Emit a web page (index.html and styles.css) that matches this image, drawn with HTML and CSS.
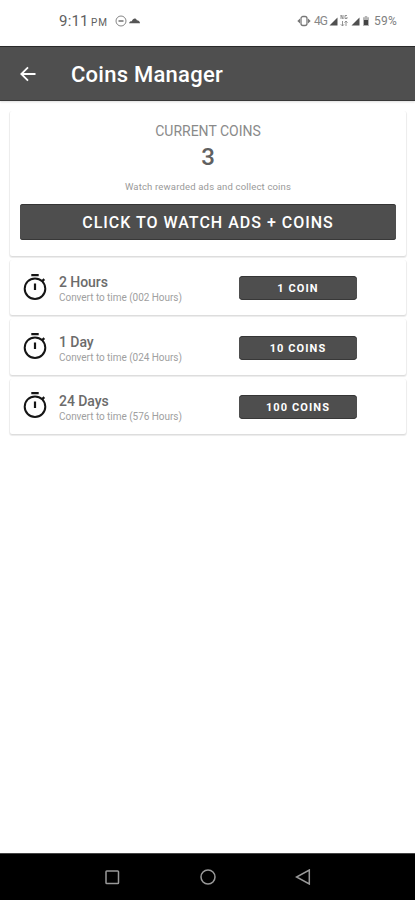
FILE: index.html
```html
<!DOCTYPE html>
<html lang="en">
<head>
<meta charset="utf-8">
<title>Coins Manager</title>
<link rel="stylesheet" href="styles.css">
</head>
<body>
<div class="screen">
  <div class="status">
    <span class="clock">9:11</span><span class="pm">PM</span>
    <svg class="notif" width="26" height="12" viewBox="0 0 26 12"><circle cx="6" cy="6" r="5" fill="none" stroke="#858585"/><path d="M3.500 6h5" stroke="#666" stroke-width="1.400"/><path d="M14 8.300c.3-1.700 1.800-2.300 2.800-2.100C18 2.700 21 2.600 21.900 5.200c1.900.1 3 1.300 3.100 3.100z" fill="#555"/></svg>
    <svg class="vibrate" width="14" height="12" viewBox="0 0 14 12"><rect x="4" y="1.500" width="6" height="9" rx="2" fill="none" stroke="#777" stroke-width="1.300"/><path d="M3 3.500v5L.3 6zM11 3.500v5L13.700 6z" fill="#777"/></svg>
    <span class="net">4G</span>
    <svg class="signal" width="9" height="9" viewBox="0 0 9 9"><path d="M8.500.5v8h-8z" fill="#505050"/></svg>
    <svg class="data" width="8" height="13" viewBox="0 0 8 13"><path d="M1 5V1l2 4V1M7 1.500H5v3h2V3M2.500 7v5M.8 10.300 2.500 12l1.500-1.700M6 12V7M4.500 8.700 6 7l1.500 1.700" fill="none" stroke="#888" stroke-width=".9"/></svg>
    <svg class="signal" width="9" height="9" viewBox="0 0 9 9"><path d="M8.500.5v8h-8z" fill="#505050"/></svg>
    <svg class="battery" width="6" height="10" viewBox="0 0 6 10"><path d="M1.800 0h2.400v1.200H6V10H0V1.200h1.800z" fill="#b5b5b5"/><path d="M1 4h4v5H1z" fill="#444"/></svg>
    <span class="percent">59%</span>
  </div>
  <header class="bar">
    <svg width="16" height="16" viewBox="0 0 16 16"><path d="M15.500 8H1.500M8 1.300 1.300 8 8 14.700" fill="none" stroke="#fff" stroke-width="1.800"/></svg>
    <h1>Coins Manager</h1>
  </header>
  <main>
    <section class="card summary">
      <div class="label">CURRENT COINS</div>
      <div class="count">3</div>
      <div class="hint">Watch rewarded ads and collect coins</div>
      <button class="watch">CLICK TO WATCH ADS + COINS</button>
    </section>
    <section class="card row">
      <svg class="timer" width="24" height="28" viewBox="0 0 24 28"><use href="#timer"/></svg>
      <div class="info"><div class="name">2 Hours</div><div class="desc">Convert to time (002 Hours)</div></div>
      <button class="price">1 COIN</button>
    </section>
    <section class="card row">
      <svg class="timer" width="24" height="28" viewBox="0 0 24 28"><use href="#timer"/></svg>
      <div class="info"><div class="name">1 Day</div><div class="desc">Convert to time (024 Hours)</div></div>
      <button class="price">10 COINS</button>
    </section>
    <section class="card row">
      <svg class="timer" width="24" height="28" viewBox="0 0 24 28"><use href="#timer"/></svg>
      <div class="info"><div class="name">24 Days</div><div class="desc">Convert to time (576 Hours)</div></div>
      <button class="price">100 COINS</button>
    </section>
  </main>
  <nav class="nav">
    <svg width="16" height="16" viewBox="0 0 16 16"><rect x="2" y="2" width="12.500" height="12.500" rx=".8"/></svg>
    <svg width="16" height="16" viewBox="0 0 16 16"><circle cx="8" cy="8" r="7"/></svg>
    <svg width="16" height="16" viewBox="0 0 16 16"><path d="M14.300 1v14L1.500 8z"/></svg>
  </nav>
</div>
<svg class="defs" width="0" height="0"><defs>
  <g id="timer"><circle cx="12" cy="15.700" r="10.300" fill="none" stroke="#151515" stroke-width="2"/><path d="M8.300 2.200h7.400M12 10.500v6.500M18.800 8.600 21.300 6.100" fill="none" stroke="#151515" stroke-width="2.200"/></g>
</defs></svg>
</body>
</html>
```
FILE: styles.css
```css
* { box-sizing: border-box; }
body { margin: 0; background: #fff; font-family: Roboto, sans-serif; }
h1 { margin: 0; }
button { border: 0; padding: 0; font-family: inherit; color: #fff; background: #4e4e4e; }
svg { display: block; flex: none; }
.defs { position: absolute; }
.screen { width: 415px; height: 900px; display: flex; flex-direction: column; overflow: hidden; }

.status { height: 46px; padding: 0 16px 5px 59px; display: flex; align-items: center; color: #606060; white-space: nowrap; }
.clock { font-size: 15px; width: 32px; letter-spacing: .2px; }
.pm { font-size: 10px; width: 24px; padding-top: 3px; letter-spacing: .9px; }
.notif { margin-right: auto; }
.vibrate { margin-right: 3px; }
.net { font-size: 12px; width: 13px; letter-spacing: -1px; color: #888; }
.signal { margin: 1px 1px 0 2px; }
.data { margin: 0 1px; }
.battery { margin: 0 5px 0 2px; }
.percent { font-size: 12px; width: 25px; color: #808080; letter-spacing: .3px; }

.bar { height: 55px; flex: none; background: #4f4f4f; border-top: 1px solid #292929; border-bottom: 1px solid #383838; display: flex; align-items: center; padding: 2px 0 0 20px; color: #fff; box-shadow: 0 1px 2px #ddd; }
.bar svg { margin-top: -2px; }
.bar h1 { margin-left: 35px; font-size: 22px; font-weight: 500; line-height: 26px; letter-spacing: .25px; }

main { flex: 1; padding: 10px 9px 0 10px; display: flex; flex-direction: column; gap: 4px; }
.card { background: #fff; border-radius: 2px; box-shadow: 0 1px 2px rgba(0,0,0,.14), 0 1px 0 1px rgba(0,0,0,.035); }
.summary { height: 145px; padding: 0 10px; display: flex; flex-direction: column; align-items: center; clip-path: inset(0 -4px -4px -4px); }
.label { margin-top: 12px; font-size: 14px; line-height: 16px; color: #8a8a8a; }
.count { margin-top: 4px; font-size: 24px; line-height: 28px; font-weight: 500; color: #606060; }
.hint { margin-top: 10px; font-size: 9.500px; line-height: 12px; color: #999; letter-spacing: .17px; }
.watch { width: 376px; height: 36px; margin-top: 11px; border-radius: 3px; font-size: 16px; font-weight: 500; letter-spacing: 1px; box-shadow: inset 0 1px #353535, inset 0 -1px #383838; }
.row { height: 55.400px; padding: 0 49px 0 13px; display: flex; align-items: center; }
.timer { margin-top: -2px; }
.info { margin-left: 12px; padding-top: 3px; }
.name { font-size: 14px; line-height: 17px; font-weight: 500; color: #6b6b6b; letter-spacing: -.05px; }
.desc { font-size: 10px; line-height: 13px; color: #a0a0a0; white-space: nowrap; letter-spacing: -.04px; }
.price { width: 118px; height: 24px; margin: 1px 0 0 auto; padding-top: 1px; border-radius: 4px; font-size: 11px; font-weight: 700; letter-spacing: 1.100px; box-shadow: inset 0 1px #353535, inset 0 -1px #383838; }

.nav { height: 47px; flex: none; background: #000; border-top: 1px solid #444; display: flex; align-items: center; justify-content: space-between; padding: 0 104px 0 104px; }
.nav svg { fill: none; stroke: #999; stroke-width: 1.500; }
```
